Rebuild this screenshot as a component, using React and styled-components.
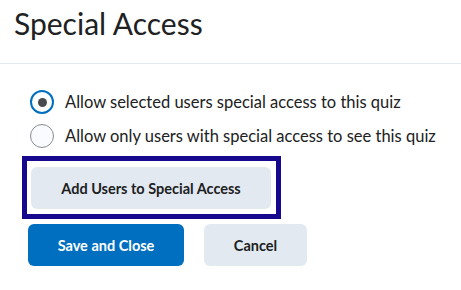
import styled, { createGlobalStyle } from "styled-components"

const Global = createGlobalStyle`
  body {
    margin: 0;
    background: #ffffff;
    font-family: Lato, "Liberation Sans", sans-serif;
    color: #202122;
  }
`

const Page = styled.div`
  width: 461px;
  height: 290px;
  overflow: hidden;
`

const Header = styled.header`
  height: 64px;
  box-sizing: border-box;
  padding: 5px 0 0 14px;
  border-bottom: 1px solid #e3e9f1;
`

const Title = styled.h1`
  margin: 0;
  font-size: 30px;
  line-height: 36px;
  font-weight: 400;
  color: #202122;
`

const Body = styled.div`
  padding: 21px 0 0 22px;
`

const RadioList = styled.div`
  display: flex;
  flex-direction: column;
  padding-left: 8px;
`

const RadioRow = styled.label`
  display: flex;
  align-items: center;
  gap: 11px;
  height: 34px;
  font-size: 16.5px;
  color: #202122;
`

const RadioCircle = styled.span`
  box-sizing: border-box;
  width: 24px;
  height: 24px;
  border-radius: 50%;
  display: flex;
  align-items: center;
  justify-content: center;
  border: ${(p) => (p.$checked ? "2px solid #006fbf" : "1px solid #868c8f")};
  background: ${(p) => (p.$checked ? "#ffffff" : "#f9fbff")};

  &::after {
    content: "";
    display: ${(p) => (p.$checked ? "block" : "none")};
    width: 9px;
    height: 9px;
    border-radius: 50%;
    background: #494c4e;
  }
`

const FocusRing = styled.div`
  display: inline-flex;
  margin-top: 3px;
  border: 5px solid #16098e;
  padding: 6px 5px 5px 4px;
`

const Button = styled.button`
  box-sizing: border-box;
  height: 42px;
  border: none;
  border-radius: 6px;
  font-family: Lato, "Liberation Sans", sans-serif;
  font-size: 14.5px;
  font-weight: 700;
  cursor: pointer;
  width: ${(p) => p.$width}px;
  background: ${(p) => (p.$primary ? "#006fbf" : "#e3e9f1")};
  color: ${(p) => (p.$primary ? "#ffffff" : "#202122")};
`

const Actions = styled.div`
  display: flex;
  gap: 20px;
  margin: 5px 0 0 6px;
`

export default function App() {
  return (
    <Page>
      <Global />
      <Header>
        <Title>Special Access</Title>
      </Header>
      <Body>
        <RadioList>
          <RadioRow>
            <RadioCircle $checked />
            Allow selected users special access to this quiz
          </RadioRow>
          <RadioRow>
            <RadioCircle />
            Allow only users with special access to see this quiz
          </RadioRow>
        </RadioList>
        <FocusRing>
          <Button $width={240}>Add Users to Special Access</Button>
        </FocusRing>
        <Actions>
          <Button $primary $width={156}>Save and Close</Button>
          <Button $width={103}>Cancel</Button>
        </Actions>
      </Body>
    </Page>
  )
}
